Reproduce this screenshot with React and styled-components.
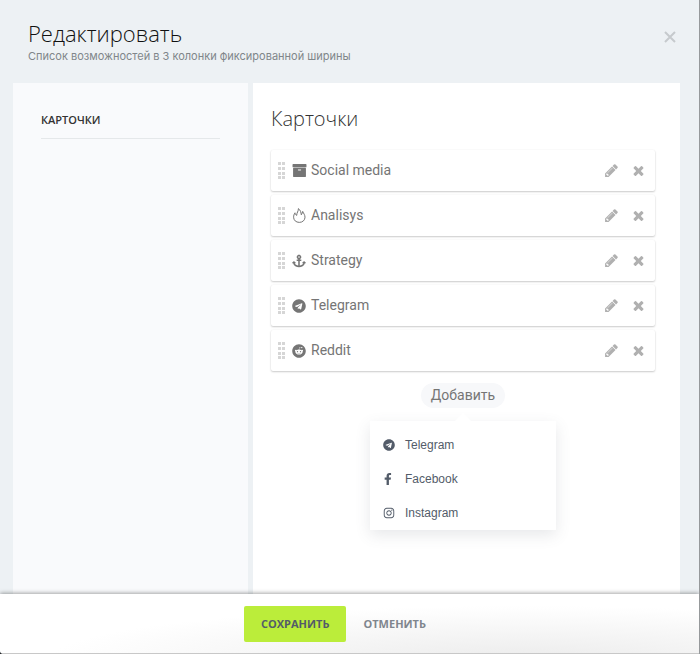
import styled, { createGlobalStyle } from "styled-components";
import {
  FaAnchor,
  FaFacebookF,
  FaInstagram,
  FaReddit,
  FaTelegram,
} from "react-icons/fa";

const ArchiveIcon = () => (
  <svg viewBox="0 0 1792 1792" width="15" height="15" fill="currentColor">
    <path d="M1088 832q0-26-19-45t-45-19h-256q-26 0-45 19t-19 45 19 45 45 19h256q26 0 45-19t19-45zm576-192v960q0 26-19 45t-45 19h-1408q-26 0-45-19t-19-45v-960q0-26 19-45t45-19h1408q26 0 45 19t19 45zm64-448v256q0 26-19 45t-45 19h-1536q-26 0-45-19t-19-45v-256q0-26 19-45t45-19h1536q26 0 45 19t19 45z" />
  </svg>
);

const FlameIcon = () => (
  <svg viewBox="0 0 13 15" width="13" height="15" fill="none" stroke="currentColor" strokeLinejoin="round">
    <path d="M2 4.8C1 6.3.6 7.8.6 9.2C.6 12.2 3 14.4 6.3 14.4S12 12.2 12 9.2C12 7 10.6 5.5 9.7 3.4C9.2 4.8 9.1 5.8 8.3 6.8C8 4.5 7.5 2 5.4.6C5.6 3 3.6 5 3.7 7.4C2.6 6.8 2.2 6 2 4.8z" />
  </svg>
);

const PencilIcon = () => (
  <svg viewBox="0 0 1792 1792" width="15" height="15" fill="currentColor">
    <path d="M491 1536l91-91-235-235-91 91v107h128v128h107zm523-928q0-22-22-22-10 0-17 7l-542 542q-7 7-7 17 0 22 22 22 10 0 17-7l542-542q7-7 7-17zm-54-192l416 416-832 832h-416v-416zm683 96q0 53-37 90l-166 166-416-416 166-165q36-38 90-38 53 0 91 38l235 234q37 39 37 91z" />
  </svg>
);

const TimesIcon = () => (
  <svg viewBox="0 0 1792 1792" width="15" height="15" fill="currentColor">
    <path d="M1490 1322q0 40-28 68l-136 136q-28 28-68 28t-68-28l-294-294-294 294q-28 28-68 28t-68-28l-136-136q-28-28-28-68t28-68l294-294-294-294q-28-28-28-68t28-68l136-136q28-28 68-28t68 28l294 294 294-294q28-28 68-28t68 28l136 136q28 28 28 68t-28 68l-294 294 294 294q28 28 28 68z" />
  </svg>
);

const CloseIcon = () => (
  <svg viewBox="0 0 12 12" width="12" height="12" stroke="currentColor" strokeWidth="2">
    <path d="M1 1l10 10M11 1L1 11" />
  </svg>
);

const GripIcon = () => (
  <svg viewBox="0 0 7 17" width="7" height="17" fill="currentColor">
    {[0, 5, 10, 14].map((y) => (
      <path key={y} d={`M0 ${y}h3v3h-3zM4 ${y}h3v3h-3z`} />
    ))}
  </svg>
);

const cards = [
  { name: "Social media", icon: <ArchiveIcon /> },
  { name: "Analisys", icon: <FlameIcon /> },
  { name: "Strategy", icon: <FaAnchor /> },
  { name: "Telegram", icon: <FaTelegram /> },
  { name: "Reddit", icon: <FaReddit /> },
];

const networks = [
  { name: "Telegram", icon: <FaTelegram /> },
  { name: "Facebook", icon: <FaFacebookF viewBox="48 0 320 512" /> },
  { name: "Instagram", icon: <FaInstagram /> },
];

export default function App() {
  return (
    <>
      <GlobalStyle />
      <Panel>
        <Header>
          <div>
            <Title>Редактировать</Title>
            <Subtitle>Список возможностей в 3 колонки фиксированной ширины</Subtitle>
          </div>
          <CloseButton type="button" aria-label="Закрыть">
            <CloseIcon />
          </CloseButton>
        </Header>
        <Content>
          <Sidebar>
            <SidebarLink href="#cards">Карточки</SidebarLink>
          </Sidebar>
          <Main id="cards">
            <SectionTitle>Карточки</SectionTitle>
            <CardList>
              {cards.map((card) => (
                <Card key={card.name}>
                  <Grip>
                    <GripIcon />
                  </Grip>
                  <CardIcon>{card.icon}</CardIcon>
                  <CardName>{card.name}</CardName>
                  <CardAction type="button" aria-label="Изменить">
                    <PencilIcon />
                  </CardAction>
                  <CardAction type="button" aria-label="Удалить">
                    <TimesIcon />
                  </CardAction>
                </Card>
              ))}
            </CardList>
            <AddArea>
              <AddButton type="button">Добавить</AddButton>
              <Menu>
                {networks.map((network) => (
                  <MenuItem key={network.name} type="button">
                    <MenuIcon>{network.icon}</MenuIcon>
                    {network.name}
                  </MenuItem>
                ))}
              </Menu>
            </AddArea>
          </Main>
        </Content>
        <Footer>
          <FooterButton type="button" $primary>
            Сохранить
          </FooterButton>
          <FooterButton type="button">Отменить</FooterButton>
        </Footer>
      </Panel>
    </>
  );
}

const GlobalStyle = createGlobalStyle`
  * {
    box-sizing: border-box;
  }

  body {
    margin: 0;
    background: #26282b;
    font-family: "Liberation Sans", Arial, sans-serif;
  }

  button {
    border: 0;
    padding: 0;
    background: none;
    font-family: inherit;
    cursor: pointer;
  }

  svg {
    display: block;
  }
`;

const Panel = styled.div`
  display: flex;
  flex-direction: column;
  min-height: 100vh;
  overflow: hidden;
  border-right: 1px solid #96999b;
  border-bottom-left-radius: 4px;
  background: #edf1f4;
`;

const Header = styled.header`
  display: flex;
  justify-content: space-between;
  align-items: flex-start;
  height: 83px;
  padding: 18px 23px 0 28px;
`;

const Title = styled.h1`
  margin: 0;
  color: #111;
  font: 300 22px/30px "Open Sans", sans-serif;
`;

const Subtitle = styled.p`
  margin: 0;
  color: #80868a;
  font: 400 11px/16px Inter, sans-serif;
`;

const CloseButton = styled.button`
  margin-top: 13px;
  color: #c6cacd;
`;

const Content = styled.div`
  display: flex;
  flex: 1;
  gap: 5px;
  padding: 0 19px 0 13px;
`;

const Sidebar = styled.nav`
  flex: 0 0 235px;
  padding: 20px 28px;
  background: #f9fafc;
`;

const SidebarLink = styled.a`
  display: block;
  padding: 8px 0 9px;
  border-bottom: 1px solid #e5e8ea;
  color: #333;
  font: 600 11px/18px "Open Sans", sans-serif;
  text-decoration: none;
  text-transform: uppercase;
`;

const Main = styled.main`
  flex: 1;
  padding: 21px 25px 0 18px;
  background: #fff;
`;

const SectionTitle = styled.h2`
  margin: 0 0 16px;
  color: #333;
  font: 300 20px/30px "Open Sans", sans-serif;
`;

const CardList = styled.ul`
  display: flex;
  flex-direction: column;
  gap: 4px;
  margin: 0;
  padding: 0;
  list-style: none;
`;

const Card = styled.li`
  display: flex;
  align-items: center;
  height: 41px;
  padding: 0 9px 0 7px;
  border-radius: 2px;
  background: #fff;
  box-shadow: 0 1px 2px rgba(0, 0, 0, 0.2), 0 0 2px rgba(0, 0, 0, 0.05);
  color: #757575;
`;

const Grip = styled.span`
  color: #d6d6d6;
  cursor: move;
`;

const CardIcon = styled.span`
  display: flex;
  justify-content: center;
  width: 16px;
  margin: 0 4px 0 6px;
  font-size: 14px;
`;

const CardName = styled.span`
  flex: 1;
  font: 400 14px/21px Roboto, sans-serif;
`;

const CardAction = styled.button`
  margin-left: 12px;
  color: #b0b0b0;
`;

const AddArea = styled.div`
  position: relative;
  display: flex;
  justify-content: center;
  padding-top: 12px;
`;

const AddButton = styled.button`
  height: 25px;
  padding: 0 10px;
  border-radius: 13px;
  background: #f7f8fa;
  color: #757575;
  font: 400 14px/25px Roboto, sans-serif;
`;

const Menu = styled.div`
  position: absolute;
  top: 100%;
  left: 50%;
  width: 186px;
  margin-top: 13px;
  padding-top: 7px;
  transform: translateX(-50%);
  background: #fff;
  box-shadow: 0 5px 14px rgba(83, 92, 105, 0.14);

  &::before {
    content: "";
    position: absolute;
    top: -8px;
    left: 50%;
    border: 8px solid transparent;
    border-top: 0;
    border-bottom-color: #fff;
    transform: translateX(-50%);
  }
`;

const MenuItem = styled.button`
  display: flex;
  align-items: center;
  width: 100%;
  height: 34px;
  padding: 0 13px;
  color: #535c69;
  font-size: 12px;
`;

const MenuIcon = styled.span`
  width: 22px;
  font-size: 12px;
`;

const Footer = styled.footer`
  position: relative;
  display: flex;
  justify-content: center;
  height: 60px;
  padding: 12px 12px 0 0;
  border-bottom: 1px solid #c8c8c8;
  background: radial-gradient(ellipse 68% 90% at 75% 110%, #ececec, #fff);
  box-shadow: 0 -1px 4px rgba(0, 0, 0, 0.35);
`;

const FooterButton = styled.button`
  height: 36px;
  padding: 0 17px;
  border-radius: 2px;
  background: ${(props) => (props.$primary ? "#bbed3a" : "none")};
  color: ${(props) => (props.$primary ? "#535c69" : "#80868e")};
  font: 700 11px/36px "Open Sans", sans-serif;
  text-transform: uppercase;
`;
